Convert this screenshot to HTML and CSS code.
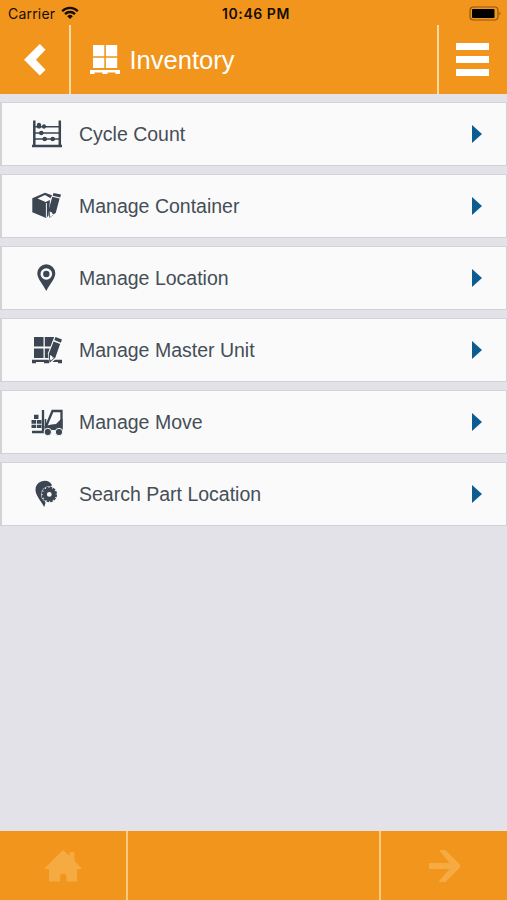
FILE: index.html
```html
<!DOCTYPE html>
<html lang="en">
<head>
<meta charset="utf-8">
<title>Inventory</title>
<link rel="stylesheet" href="styles.css">
</head>
<body>
<div class="status">
  <div class="carrier"><span>Carrier</span>
    <svg width="18" height="14" viewBox="0 0 18 14" fill="none" stroke="#160d02" stroke-width="2.3"><path d="M1.2 5.2a11 11 0 0 1 15.6 0M4 8.1a7 7 0 0 1 10 0"/><path d="M9 13L6.2 10.2a4 4 0 0 1 5.6 0z" fill="#160d02" stroke="none"/></svg>
  </div>
  <div class="time">10:46 PM</div>
  <svg class="battery" width="33" height="15" viewBox="0 0 33 15"><rect x="1" y="1" width="28" height="13" rx="3.5" fill="none" stroke="#8f5912" stroke-width="1.2"/><rect x="3" y="3" width="22.5" height="9" rx="1" fill="#000"/><path d="M30.5 5.5q2 2 0 4z" fill="#8f5912"/></svg>
</div>
<header class="header">
  <div class="back"><svg width="24" height="32" viewBox="0 0 24 32"><path d="M16.8 0L22.5 5.800L12.900 15.800L22.500 25.800L16.800 31.500L1 15.800z" fill="#fff"/></svg></div>
  <div class="title">
    <svg width="30" height="31" viewBox="0 0 30 31" fill="#fff"><path d="M3 1h11.3v11.3H3zM15.900 1h11.3v11.3H15.900zM3 13.800h11.3V24H3zM15.900 13.800h11.3V24H15.900zM0 26h30v4h-4.500v-1.500H17.500V30h-5v-1.500H4.500V30H0z"/></svg>
    <h1>Inventory</h1>
  </div>
  <div class="menu"><i></i><i></i><i></i></div>
</header>
<main class="list">
  <div class="row">
    <svg class="icon" viewBox="0 0 36 36" fill="#3b4652" stroke="#3b4652"><path d="M5.300 4.500V30M30.800 4.500V30" stroke-width="2.500"/><path d="M5 10.700h26M5 17h26M5 23h26" stroke-width="1.400"/><path d="M3 30h30" stroke-width="2.500"/><g stroke="none"><ellipse cx="10" cy="9.700" rx="2.200" ry="2.900"/><ellipse cx="15" cy="10.500" rx="2" ry="2.300"/><ellipse cx="12.300" cy="17" rx="2.300" ry="2.300"/><ellipse cx="15.700" cy="23" rx="2.300" ry="2.300"/><ellipse cx="23.700" cy="23" rx="2.300" ry="2.300"/></g></svg>
    <span>Cycle Count</span><b></b>
  </div>
  <div class="row">
    <svg class="icon" viewBox="0 0 36 36" fill="#3b4652"><path d="M3.300 10.200L16 4.700L23 7.200L21.600 10.300L16 7L8.500 10.400L16.600 14L21 12L19.500 27.800L17.200 30L3.300 24.200z"/><path d="M17.400 15V29.500" stroke="#fafafa" stroke-width="1"/><path d="M24.500 5l7.500 1.600-.8 3-7.500-1.800z"/><path d="M23.300 8.700l7.300 1.900-3.800 14.200-6.300 5.200-1-7.500z"/><path d="M20.600 23.500l2 .8 1.200 1.700 1.900-.2-4.600 3.300z" fill="#fafafa"/></svg>
    <span>Manage Container</span><b></b>
  </div>
  <div class="row">
    <svg class="icon" viewBox="0 0 36 36"><path d="M17.300 4.300a9 9 0 0 1 9 9c0 5.300-5.500 11-9 17.700c-3.500-6.700-9-12.400-9-17.700a9 9 0 0 1 9-9z" fill="#3b4652"/><circle cx="17.300" cy="14" r="5.800" fill="#fafafa"/><circle cx="17.300" cy="14" r="3.200" fill="#3b4652"/></svg>
    <span>Manage Location</span><b></b>
  </div>
  <div class="row">
    <svg class="icon" viewBox="0 0 36 36" fill="#3b4652"><path d="M5 5h9.500v9.500H5zM15.800 5h9.500v9.500h-9.500zM5 16.500h9.500V26H5zM15.800 16.500h9V26h-9zM3 27.800h30v3.400h-4v-1.200H20v1.200h-5v-1.200H7v1.200H3z"/><path d="M25.700 3.500l8.300 3.500-6 19-7.500 6.500-1.700-11z" fill="#fafafa"/><path d="M26.500 5l6.500 2.500-1.200 3.200-6.500-2.600zM24.600 9.500l6.500 2.600-4.800 13.600-5.800 5-.8-8.700z"/><path d="M21 23l1.900.9.900 1.500 1.600.1-3.400 3-1-1.200z" fill="#fafafa"/></svg>
    <span>Manage Master Unit</span><b></b>
  </div>
  <div class="row">
    <svg class="icon" viewBox="0 0 36 36" fill="#3b4652"><path d="M5 10.800h4.500V15H5zM2.500 16h4.700v3.800H2.500zM8 16h4.500v3.800H8zM2.500 20.700h4.700v3.300H2.500zM8 20.700h4.500v3.300H8z"/><path d="M3 28h11V6" fill="none" stroke="#3b4652" stroke-width="2.300"/><path d="M17 22.500L23.500 7H32.500V25" fill="none" stroke="#3b4652" stroke-width="2.300"/><path d="M15.500 22l7-1.500L27 20l5-5h1.500V26H15.500z"/><path d="M16.500 15v9" stroke="#3b4652" stroke-width="1.500"/><circle cx="18.800" cy="28" r="3.700" stroke="#fafafa"/><circle cx="30" cy="28" r="3.700" stroke="#fafafa"/></svg>
    <span>Manage Move</span><b></b>
  </div>
  <div class="row">
    <svg class="icon" viewBox="0 0 36 36"><path d="M15.200 31C12.500 25.500 6.500 19.500 6.500 14a9 9 0 0 1 16.500-5L14.500 21l2 6z" fill="#3b4652"/><circle cx="20.300" cy="18.400" r="8.200" fill="#fafafa"/><circle cx="20.300" cy="18.400" r="4.500" fill="none" stroke="#3b4652" stroke-width="4.200"/><circle cx="20.300" cy="18.400" r="6.900" fill="none" stroke="#3b4652" stroke-width="1.800" stroke-dasharray="2.700 .910"/></svg>
    <span>Search Part Location</span><b></b>
  </div>
</main>
<footer class="footer">
  <div><svg width="38" height="32" viewBox="0 0 38 32" fill="#f5ab42"><path d="M19 0L25.500 6V2h5v8.800L38 19h-4.800v12.500H22.500v-4.500a3.200 3.200 0 0 0-6.400 0v4.500H5V19H0z"/></svg></div>
  <div></div>
  <div><svg width="31" height="34" viewBox="0 0 31 34" fill="#f5ab42"><path d="M10 1h6.500L31 15.500v3L16.500 33H9.300L20.500 20H0v-6h20.500z"/></svg></div>
</footer>
</body>
</html>
```
FILE: styles.css
```css
* { box-sizing: border-box; }
body { margin: 0; height: 900px; display: flex; flex-direction: column; background: #e3e2e8; font-family: "Liberation Sans", Arial, sans-serif; overflow: hidden; }
.status { height: 25px; flex: none; display: grid; grid-template-columns: 1fr auto 1fr; align-items: center; padding: 2px 5px 0 8px; background: #f1951d; color: #160d02; font-family: Inter, sans-serif; font-size: 14px; line-height: 22px; }
.carrier { display: flex; align-items: center; gap: 6px; letter-spacing: .2px; }
.carrier svg { margin-top: -1px; }
.time { font-weight: 600; letter-spacing: .55px; padding-left: 2px; }
.battery { justify-self: end; margin-top: -1px; }
.header { height: 69px; flex: none; display: flex; background: #f1951d; color: #fff; }
.back { width: 71px; border-right: 2px solid #fbd9a0; padding: 19px 0 0 23px; }
.title { flex: 1; display: flex; align-items: center; gap: 9.5px; padding-left: 19px; }
.title svg { margin-top: -1px; }
.title h1 { margin: 1px 0 0; font-size: 25.5px; line-height: 30px; font-weight: 400; }
.menu { width: 70px; border-left: 2px solid #fbd9a0; display: flex; flex-direction: column; gap: 6px; padding: 18px 0 0 17px; }
.menu i { width: 33px; height: 7px; background: #fff; }
.list { flex: 1; display: flex; flex-direction: column; gap: 8px; padding-top: 8px; }
.row { height: 64px; display: flex; align-items: center; background: #fafafa; border: 1px solid #d2d2d7; border-width: 1px 1px 1px 2px; padding: 0 24px 0 27px; color: #454e57; font-size: 19.5px; }
.icon { width: 36px; height: 36px; margin-right: 14px; flex: none; }
.row span { flex: 1; line-height: 24px; }
.row b { border-left: 10px solid #0b5c91; border-top: 9px solid transparent; border-bottom: 9px solid transparent; }
.footer { height: 69px; flex: none; display: grid; grid-template-columns: 128px 1fr 126px; background: #f1951d; }
.footer div { display: flex; align-items: center; justify-content: center; }
.footer div:nth-child(-n+2) { border-right: 2px solid #fccb80; }
```
